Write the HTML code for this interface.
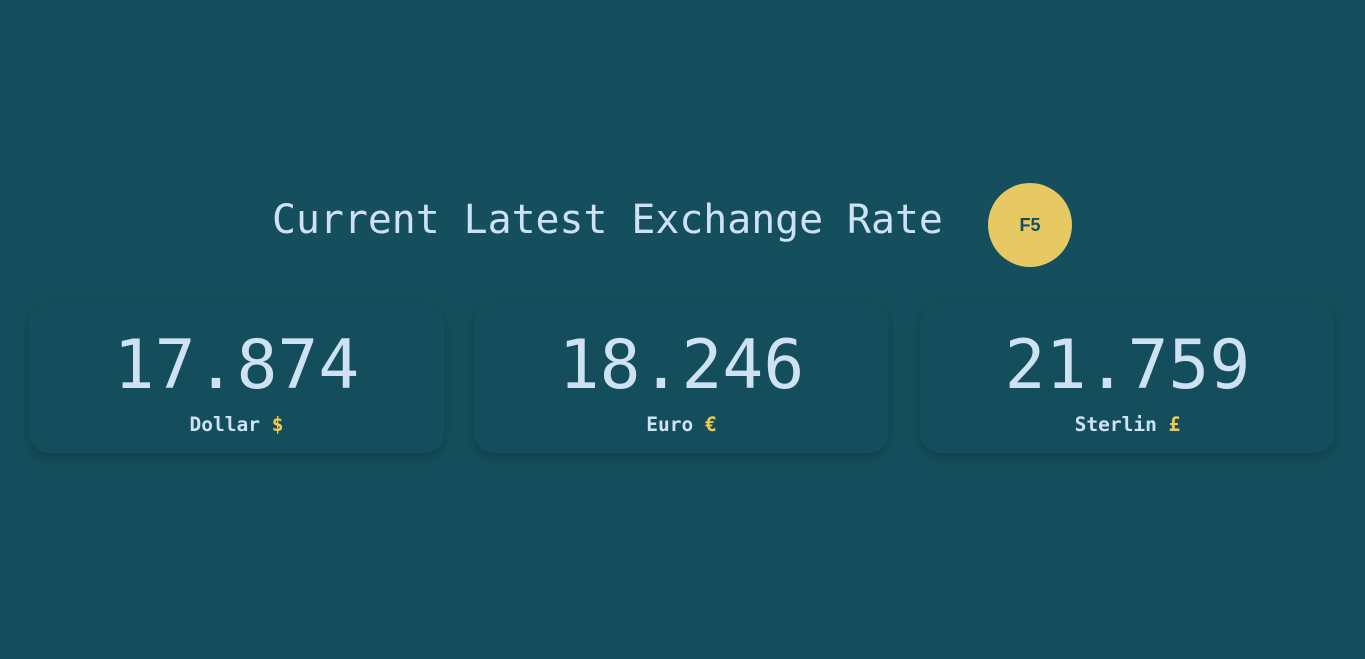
<!DOCTYPE html>
<html><head><style>
body{margin:0;width:1365px;height:659px;background:#154f5d;font-family:"DejaVu Sans Mono","Liberation Mono",monospace;overflow:hidden;position:relative}
.t{position:absolute;left:272px;top:195px;font-size:39.8px;color:#cfe2f3;line-height:50px;white-space:nowrap;font-weight:500}
.b{position:absolute;left:988px;top:183px;width:84px;height:84px;border-radius:50%;background:#e6c962;color:#154f5d;font-weight:bold;font-size:18px;display:flex;align-items:center;justify-content:center;font-family:"Liberation Sans Narrow","Liberation Sans",sans-serif}
.c{position:absolute;top:303px;width:415px;height:150px;border-radius:20px;background:#144d5b;box-shadow:0 4px 12px rgba(0,0,0,.22);text-align:center;color:#cfe2f3}
.n{font-size:68px;line-height:70px;margin-top:28px}
.l{font-size:19.5px;font-weight:bold;margin-top:12px}
.l span{color:#f2c94c}
</style></head><body>
<div class="t">Current Latest Exchange Rate</div>
<div class="b">F5</div>
<div class="c" style="left:29px"><div class="n">17.874</div><div class="l">Dollar <span>$</span></div></div>
<div class="c" style="left:474px"><div class="n">18.246</div><div class="l">Euro <span>€</span></div></div>
<div class="c" style="left:920px"><div class="n">21.759</div><div class="l">Sterlin <span>£</span></div></div>
</body></html>
